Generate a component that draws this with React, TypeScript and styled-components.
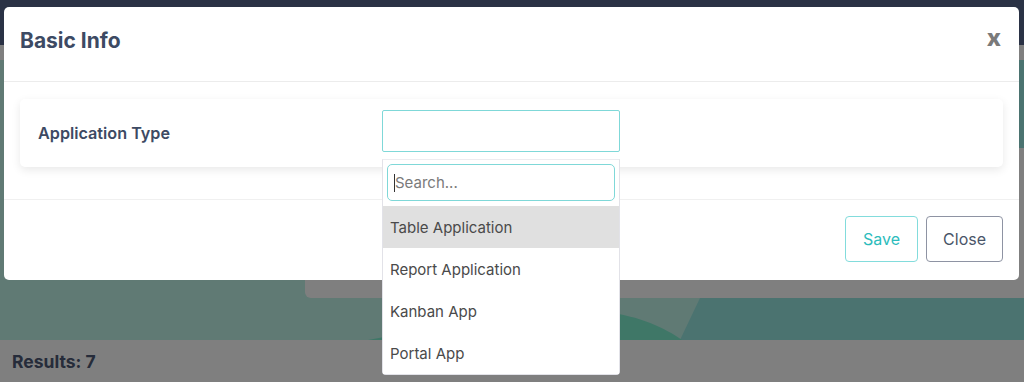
import React from 'react';
import styled, { createGlobalStyle } from 'styled-components';

const options = ['Table Application', 'Report Application', 'Kanban App', 'Portal App'];

const App: React.FC = () => {
    return (
        <>
            <GlobalStyle />
            <Page>
                <Navbar />
                <Strip />
                <Banner>
                    <Waves viewBox="0 0 1024 280" preserveAspectRatio="none">
                        <polygon points="0,0 790,0 700,238 680,280 0,280" fill="#c0f4e9" />
                        <path d="M368,280 C440,266 540,250 605,252 C640,256 665,268 682,280 Z" fill="#7eeecf" />
                    </Waves>
                    <BannerCard />
                </Banner>
                <ResultsBar>Results: 7</ResultsBar>
            </Page>

            <Backdrop />

            <Modal>
                <Header>
                    <Title>Basic Info</Title>
                    <CloseX>x</CloseX>
                </Header>
                <Body>
                    <FieldCard>
                        <Label>Application Type</Label>
                        <SelectWrap>
                            <SelectBox />
                            <Dropdown>
                                <SearchBox>
                                    <Caret />
                                    <SearchInput placeholder="Search..." />
                                </SearchBox>
                                {options.map((item, index) => (
                                    <Option key={item} active={index === 0}>{item}</Option>
                                ))}
                            </Dropdown>
                        </SelectWrap>
                    </FieldCard>
                </Body>
                <Footer>
                    <Button variant="save">Save</Button>
                    <Button variant="close">Close</Button>
                </Footer>
            </Modal>
        </>
    );
};

export default App;

const GlobalStyle = createGlobalStyle`
    html, body {
        margin: 0;
        padding: 0;
        background: #ffffff;
        font-family: Inter, "Noto Sans", "Liberation Sans", sans-serif;
        overflow: hidden;
    }
    * { box-sizing: border-box; }
`;

const Page = styled.div`
    width: 1024px;
    height: 382px;
    display: flex;
    flex-direction: column;
`;

const Navbar = styled.div`
    height: 45px;
    background-color: #54648a;
`;

const Strip = styled.div`
    height: 15px;
    background-color: #ffffff;
`;

const Banner = styled.div`
    position: relative;
    height: 280px;
    background-color: #96e6e0;
    display: flex;
    flex-direction: column;
    justify-content: flex-end;
`;

const Waves = styled.svg`
    position: absolute;
    inset: 0;
    width: 100%;
    height: 100%;
`;

const BannerCard = styled.div`
    position: relative;
    margin-left: 305px;
    margin-bottom: 42px;
    height: 150px;
    background-color: #ffffff;
    border-bottom-left-radius: 6px;
`;

const ResultsBar = styled.div`
    flex: 1;
    display: flex;
    align-items: center;
    padding-left: 12px;
    font-size: 17.5px;
    font-weight: 700;
    color: #4c5874;
`;

const Backdrop = styled.div`
    position: fixed;
    inset: 0;
    background-color: rgba(0, 0, 0, 0.5);
`;

const Modal = styled.div`
    position: fixed;
    top: 7px;
    left: 4px;
    width: 1015px;
    height: 273px;
    background-color: #ffffff;
    border-radius: 5px;
    display: flex;
    flex-direction: column;
`;

const Header = styled.div`
    height: 75px;
    border-bottom: 1px solid #ececec;
    display: flex;
    align-items: center;
    justify-content: space-between;
    padding: 0 18px 8px 16px;
`;

const Title = styled.div`
    font-size: 21px;
    font-weight: 700;
    color: #3d4a63;
`;

const CloseX = styled.div`
    font-size: 24px;
    font-weight: 800;
    color: #7a7a7a;
    line-height: 1;
    margin-top: -4px;
`;

const Body = styled.div`
    padding: 17px 16px 32px;
    border-bottom: 1px solid #f0f0f0;
`;

const FieldCard = styled.div`
    height: 68px;
    border-radius: 5px;
    background-color: #ffffff;
    box-shadow: 0 3px 10px rgba(0, 0, 0, 0.09);
    display: flex;
    align-items: flex-start;
    padding: 11px 18px 0;
`;

const Label = styled.div`
    width: 344px;
    height: 42px;
    display: flex;
    align-items: center;
    padding-top: 4px;
    font-size: 16.2px;
    font-weight: 600;
    color: #3d4a63;
`;

const SelectWrap = styled.div`
    position: relative;
    width: 238px;
`;

const SelectBox = styled.div`
    height: 42px;
    border: 1px solid #7fd8d8;
    border-radius: 2px;
    background: #ffffff;
`;

const Dropdown = styled.div`
    position: absolute;
    top: 49px;
    left: 0;
    width: 238px;
    background-color: #ffffff;
    border: 1px solid #e2e2e8;
    border-top-color: #ececf0;
    border-radius: 0 0 4px 4px;
    padding-top: 4px;
    z-index: 10;
`;

const SearchBox = styled.div`
    position: relative;
    width: 228px;
    height: 37px;
    margin: 0 0 5px 4px;
`;

const Caret = styled.span`
    position: absolute;
    left: 7px;
    top: 10px;
    width: 1px;
    height: 18px;
    background-color: #333;
`;

const SearchInput = styled.input`
    display: block;
    width: 100%;
    height: 100%;
    border: 1px solid #7fd8d8;
    border-radius: 5px;
    padding: 0 7px;
    font-family: Inter, "Noto Sans", sans-serif;
    font-size: 15px;
    color: #444;
    outline: none;
    background: transparent;
    &::placeholder {
        color: #7a7a7a;
    }
`;

const Option = styled.div<{ active?: boolean }>`
    height: 42px;
    display: flex;
    align-items: center;
    padding-left: 7px;
    font-size: 15px;
    color: #4a4a4a;
    background-color: ${p => (p.active ? '#e0e0e0' : '#ffffff')};
`;

const Footer = styled.div`
    flex: 1;
    display: flex;
    align-items: center;
    justify-content: flex-end;
    gap: 8px;
    padding: 0 16px 2px;
`;

const Button = styled.div<{ variant: 'save' | 'close' }>`
    height: 46px;
    padding: 0 ${p => (p.variant === 'save' ? '17px' : '16px')};
    display: flex;
    align-items: center;
    border-radius: 4px;
    font-size: 16px;
    color: ${p => (p.variant === 'save' ? '#2cbcbc' : '#4a5568')};
    border: 1px solid ${p => (p.variant === 'save' ? '#82dcdc' : '#8e93a3')};
    background: #ffffff;
`;
